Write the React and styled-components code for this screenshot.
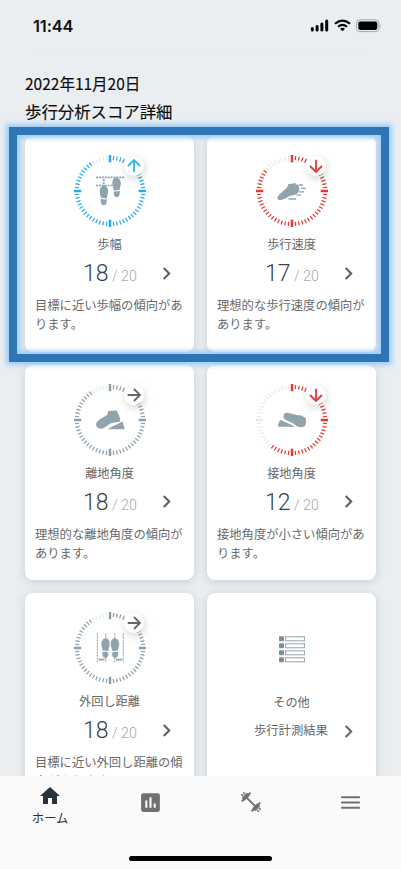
import React from 'react';
import styled, { createGlobalStyle } from 'styled-components';
import { MdChevronRight, MdHome, MdInsertChart, MdMenu } from 'react-icons/md';

const GlobalStyle = createGlobalStyle`
  * {
    box-sizing: border-box;
  }

  body {
    margin: 0;
    font-family: 'Noto Sans CJK JP', sans-serif;
  }
`;

const Screen = styled.div`
  position: relative;
  display: flex;
  flex-direction: column;
  width: 401px;
  height: 869px;
  overflow: hidden;
  background-color: #eaeef1;
`;

const StatusBar = styled.div`
  display: flex;
  flex: none;
  justify-content: space-between;
  height: 50px;
  padding: 15px 19px 0 33px;
`;

const Clock = styled.span`
  font-family: Inter, sans-serif;
  font-size: 16.4px;
  font-weight: 600;
  line-height: 22px;
  letter-spacing: -0.1px;
  color: #111;
`;

const StatusIcons = styled.svg`
  width: 72px;
  height: 14px;
  margin-top: 4px;
`;

const Divider = styled.div`
  flex: none;
  height: 1px;
  margin: 0 35px;
  background-color: #e6eaed;
`;

const Header = styled.header`
  flex: none;
  height: 85px;
  padding: 19px 25px 0;
  color: #0c0c0c;
  -webkit-text-stroke: 0.15px #0c0c0c;
`;

const DateText = styled.div`
  font-size: 15.5px;
  font-weight: 400;
  line-height: 27px;
`;

const Title = styled.h1`
  margin: 0;
  font-size: 16.4px;
  font-weight: 400;
  line-height: 29px;
`;

const Content = styled.main`
  position: relative;
  flex: 1;
  min-height: 0;
`;

const Cards = styled.div`
  display: grid;
  grid-template-columns: 169px 169px;
  grid-auto-rows: 215.5px;
  gap: 13px;
  padding: 0 25px;
`;

const Card = styled.section`
  display: flex;
  flex-direction: column;
  align-items: center;
  padding-top: 18px;
  border-radius: 8px;
  background-color: #fff;
  box-shadow: 0 2px 8px rgba(70, 90, 105, 0.22);
`;

const Gauge = styled.div`
  position: relative;
  width: 74px;
  height: 74px;
`;

const Badge = styled.div`
  position: absolute;
  top: 2px;
  right: 2.5px;
  display: flex;
  align-items: center;
  justify-content: center;
  width: 20px;
  height: 20px;
  border-radius: 50%;
  color: ${(props) => props.$color};
  background-color: #fff;
  box-shadow: 1px 3px 8px rgba(0, 0, 0, 0.17);
`;

const Label = styled.h2`
  margin: 6px 0 0;
  font-size: 12.2px;
  font-weight: 400;
  line-height: 20px;
  color: #666;
`;

const ScoreRow = styled.div`
  display: grid;
  grid-template-columns: 1fr 25px;
  align-items: center;
  width: 100%;
  height: 34px;
  margin-top: 3px;
  padding: 0 15px 0 58px;
  color: #606060;

  > svg {
    margin-bottom: 4px;
  }
`;

const Score = styled.div`
  font-family: Roboto, sans-serif;
  font-size: 23px;
  font-weight: 300;
  line-height: 34px;
  color: #37424a;
`;

const Total = styled.span`
  margin-left: 3.5px;
  font-size: 14.2px;
  color: #a8a8a8;
`;

const Description = styled.p`
  width: 149px;
  margin: 5px 0 0;
  font-size: 12.3px;
  line-height: 19px;
  color: #6a6a6a;
`;

const ListIcon = styled.svg`
  width: 26px;
  height: 27px;
  margin-top: 25px;
`;

const OtherLabel = styled(Label)`
  margin-top: 29px;
`;

const OtherRow = styled.div`
  display: grid;
  grid-template-columns: 1fr 25px;
  align-items: center;
  width: 100%;
  margin-top: 3px;
  padding: 0 15px 0 47px;
  font-size: 12.3px;
  line-height: 22px;
  color: #666;

  svg {
    margin-top: 4px;
  }
`;

const Highlight = styled.div`
  position: absolute;
  top: -9px;
  left: 9px;
  width: 380px;
  height: 235px;
  border: 8px solid #2e75b6;
  box-shadow: 0 0 5px 3px #9dcbf8, inset 0 0 5px 3px #9dcbf8;
`;

const NavBar = styled.nav`
  position: relative;
  display: grid;
  flex: none;
  grid-template-columns: repeat(4, 1fr);
  height: 93px;
  padding-top: 8px;
  background-color: #fafafa;
`;

const NavItem = styled.div`
  display: flex;
  flex-direction: column;
  align-items: center;
  padding-top: ${(props) => (props.$active ? 0 : '5.5px')};
  font-size: 12.3px;
  line-height: 20px;
  color: ${(props) => (props.$active ? '#27323a' : '#707070')};
`;

const HomeIndicator = styled.div`
  position: absolute;
  bottom: 8px;
  left: 129px;
  width: 143px;
  height: 5px;
  border-radius: 3px;
  background-color: #000;
`;

const BLUE = '#22aaf2';
const RED = '#e53935';
const GRAY = '#8ba0ac';
const ICON = '#90a4ae';

const Sole = ({ x, y, flip }) => (
  <g transform={`translate(${x} ${y}) scale(${flip ? -1 : 1} 1)`} fill={ICON}>
    <path d="M4.6 0C7.2 0 8.7 3 8.4 6.4C8.2 9 7.2 10.6 7 12.9L1.2 12.3C1.2 10 0 9 0 6C0 2.8 1.8 0 4.6 0Z" />
    <path d="M1.2 13.6L7 14.1C7.4 17.7 6.4 19.8 4.2 19.8C1.6 19.8 0.7 17.2 1.2 13.6Z" />
  </g>
);

const icons = {
  stride: (
    <>
      <path
        d="M23 23.3H52M23 31.5H40M30.8 25V32"
        stroke={ICON}
        strokeWidth="1.7"
        strokeDasharray="2 0.9"
      />
      <Sole x={26.7} y={31.5} />
      <Sole x={47.8} y={23.5} flip />
    </>
  ),
  speed: (
    <>
      <path
        d="M23 42.2C21.5 44.7 23 46.2 26 45.9C29 45.5 31.5 43.8 34.5 42C38 41 41 41 42.8 39C45 36.5 44.6 33 42.8 30.8L40.8 30.2L40 28.8C37.5 30 34.5 29.5 33 30.5C33.5 34.5 25.5 38 23 42.2Z"
        fill={ICON}
      />
      <path d="M43.5 31H48M46 34.3H51M44 37.8H49M41.5 41.1H46M33.5 45H41" stroke={ICON} strokeWidth="1.3" />
    </>
  ),
  lift: (
    <>
      <path
        d="M24 38.7C22 41.5 23.5 45.5 28 45.6C32.5 45.7 35 40.5 40 39.7C43 39.2 46.5 39.5 47.2 37.7C47.3 34 45.2 30 43.2 26.9L42 27.8L35.2 28L34.5 31.5C31 34.5 26.5 35.5 24 38.7Z"
        fill={ICON}
      />
      <path d="M34.5 46.3C37 44.5 41 42.5 44.5 41.2L49.5 38.2L51.7 46.3Z" fill={ICON} />
    </>
  ),
  landing: (
    <>
      <path d="M23 43.7C23 41 24 38.5 25.2 36.7L40.5 43.7Z" fill={ICON} />
      <path
        d="M28.4 33.2C28.8 29.7 31.5 29.2 35 30.3L44 32.6L45 32L50.5 34.8C51.5 38 51.3 41.7 49.5 43.3C47 45 42.5 44.2 40.3 42C38.5 39.8 36 39.3 33 37.9C30 36.5 28.2 35.5 28.4 33.2Z"
        fill={ICON}
      />
    </>
  ),
  circumduction: (
    <>
      <path d="M24.3 22.5V51M32.7 22.5V51M41.8 22.5V51M50.2 22.5V51" stroke={ICON} strokeWidth="1.1" strokeDasharray="2 1" />
      <path d="M25.5 48.6H31.5M43 48.6H49" stroke={ICON} strokeWidth="1.8" />
      <Sole x={28.3} y={27.2} />
      <Sole x={46.2} y={27.2} flip />
    </>
  ),
};

const arrows = {
  up: 0,
  right: 90,
  down: 180,
};

const TICKS = Array.from({ length: 60 }, (_, i) => i);

const ScoreGauge = ({ score, color, icon, trend }) => (
  <Gauge>
    <svg width="74" height="74" viewBox="0 0 74 74" fill="none">
      {TICKS.map((i) => {
        const major = i % 15 === 0;
        return (
          <path
            key={i}
            d={major ? 'M37 1V8.3' : 'M37 1.8V6'}
            transform={`rotate(${i * 6} 37 37)`}
            stroke={i <= score * 3 ? color : '#e6ebed'}
            strokeWidth={major ? 2.5 : 1.2}
          />
        );
      })}
      {icons[icon]}
    </svg>
    <Badge $color={trend === 'right' ? '#666' : trend === 'up' ? '#35b4f5' : RED}>
      <svg width="14" height="14" viewBox="0 0 14 14" fill="none">
        <path
          d="M7 13.3V1.2M1 7L7 1L13 7"
          stroke="currentColor"
          strokeWidth="1.8"
          transform={`rotate(${arrows[trend]} 7 7)`}
        />
      </svg>
    </Badge>
  </Gauge>
);

const ScoreCard = ({ label, score, text, color, icon, trend }) => (
  <Card>
    <ScoreGauge score={score} color={color} icon={icon} trend={trend} />
    <Label>{label}</Label>
    <ScoreRow>
      <Score>
        {score}
        <Total>/ 20</Total>
      </Score>
      <MdChevronRight size={25} />
    </ScoreRow>
    <Description>{text}</Description>
  </Card>
);

const scores = [
  { label: '歩幅', score: 18, color: BLUE, icon: 'stride', trend: 'up', text: '目標に近い歩幅の傾向があります。' },
  { label: '歩行速度', score: 17, color: RED, icon: 'speed', trend: 'down', text: '理想的な歩行速度の傾向があります。' },
  { label: '離地角度', score: 18, color: GRAY, icon: 'lift', trend: 'right', text: '理想的な離地角度の傾向があります。' },
  { label: '接地角度', score: 12, color: RED, icon: 'landing', trend: 'down', text: '接地角度が小さい傾向があります。' },
  { label: '外回し距離', score: 18, color: GRAY, icon: 'circumduction', trend: 'right', text: '目標に近い外回し距離の傾向があります。' },
];

const Dumbbell = () => (
  <svg width="24" height="24" viewBox="0 0 24 24" fill="none" stroke="currentColor">
    <path d="M6 6L18 18" strokeWidth="1.8" />
    <path d="M4.2 9.4L9.4 4.2M14.6 19.8L19.8 14.6" strokeWidth="4" />
    <path d="M2.8 11.4L11.4 2.8M12.6 21.2L21.2 12.6" strokeWidth="2" />
    <path d="M2.3 4.2L4.2 6.1M4.2 2.3L6.1 4.2M17.9 19.8L19.8 21.7M19.8 17.9L21.7 19.8" strokeWidth="1.5" />
  </svg>
);

const App = () => (
  <Screen>
    <GlobalStyle />
    <StatusBar>
      <Clock>11:44</Clock>
      <StatusIcons viewBox="0 0 72 14" fill="none">
        <path d="M2.3 9.5V11M7.1 7.5V11M11.9 5V11M16.7 2V11" stroke="#000" strokeWidth="3" strokeLinecap="round" />
        <path d="M25 4.8Q32.5 -1.5 40 4.8M28 7.7Q32.5 4 37 7.7" stroke="#000" strokeWidth="2.1" />
        <path d="M30 9.7Q32.5 7.8 35 9.7L32.5 12.2Z" fill="#000" />
        <rect x="46.5" y="0.8" width="22.5" height="11.8" rx="3.4" stroke="#a4a7a9" />
        <rect x="48.3" y="2.5" width="19" height="8.4" rx="1.8" fill="#000" />
        <path d="M70.2 5V8.5Q72 6.8 70.2 5Z" fill="#a4a7a9" />
      </StatusIcons>
    </StatusBar>
    <Divider />
    <Header>
      <DateText>2022年11月20日</DateText>
      <Title>歩行分析スコア詳細</Title>
    </Header>
    <Content>
      <Cards>
        {scores.map((item) => (
          <ScoreCard key={item.label} {...item} />
        ))}
        <Card>
          <ListIcon viewBox="0 0 26 27" fill="none">
            {[0, 7, 14, 21].map((y) => (
              <g key={y}>
                <rect x="0" y={y + 0.3} width="5" height="5" rx="1" fill="#78909c" />
                <rect x="6.6" y={y + 0.8} width="18.8" height="4" stroke={ICON} />
              </g>
            ))}
          </ListIcon>
          <OtherLabel>その他</OtherLabel>
          <OtherRow>
            歩行計測結果
            <MdChevronRight size={25} />
          </OtherRow>
        </Card>
      </Cards>
      <Highlight />
    </Content>
    <NavBar>
      <NavItem $active>
        <MdHome size={24} />
        ホーム
      </NavItem>
      <NavItem>
        <MdInsertChart size={25} />
      </NavItem>
      <NavItem>
        <Dumbbell />
      </NavItem>
      <NavItem>
        <MdMenu size={25} />
      </NavItem>
      <HomeIndicator />
    </NavBar>
  </Screen>
);

export default App;
